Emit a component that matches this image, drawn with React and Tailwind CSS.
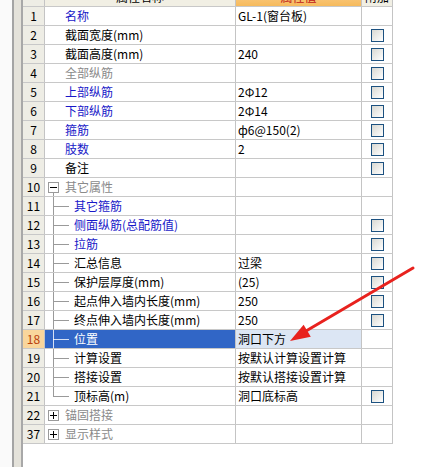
import React from 'react';

const BLUE = 'text-[#1818c8]';
const BLACK = 'text-black';
const GRAY = 'text-[#8a8a8a]';

// tree: 0 = none, 'minus' / 'plus' = expander box, 'child' = branch, 'last' = last branch
const rows = [
  { n: 1, name: '名称', c: BLUE, v: 'GL-1(窗台板)' },
  { n: 2, name: '截面宽度(mm)', c: BLACK, v: '', cb: true },
  { n: 3, name: '截面高度(mm)', c: BLACK, v: '240', cb: true },
  { n: 4, name: '全部纵筋', c: GRAY, v: '', cb: true },
  { n: 5, name: '上部纵筋', c: BLUE, v: '2Φ12', cb: true },
  { n: 6, name: '下部纵筋', c: BLUE, v: '2Φ14', cb: true },
  { n: 7, name: '箍筋', c: BLUE, v: 'ф6@150(2)', cb: true },
  { n: 8, name: '肢数', c: BLUE, v: '2', cb: true },
  { n: 9, name: '备注', c: BLACK, v: '', cb: true },
  { n: 10, name: '其它属性', c: GRAY, v: '', tree: 'minus' },
  { n: 11, name: '其它箍筋', c: BLUE, v: '', tree: 'child' },
  { n: 12, name: '侧面纵筋(总配筋值)', c: BLUE, v: '', tree: 'child', cb: true },
  { n: 13, name: '拉筋', c: BLUE, v: '', tree: 'child', cb: true },
  { n: 14, name: '汇总信息', c: BLACK, v: '过梁', tree: 'child', cb: true },
  { n: 15, name: '保护层厚度(mm)', c: BLACK, v: '(25)', tree: 'child', cb: true },
  { n: 16, name: '起点伸入墙内长度(mm)', c: BLACK, v: '250', tree: 'child', cb: true },
  { n: 17, name: '终点伸入墙内长度(mm)', c: BLACK, v: '250', tree: 'child', cb: true },
  { n: 18, name: '位置', c: 'text-white', v: '洞口下方', tree: 'child', selected: true },
  { n: 19, name: '计算设置', c: BLACK, v: '按默认计算设置计算', tree: 'child' },
  { n: 20, name: '搭接设置', c: BLACK, v: '按默认搭接设置计算', tree: 'child' },
  { n: 21, name: '顶标高(m)', c: BLACK, v: '洞口底标高', tree: 'last', cb: true },
  { n: 22, name: '锚固搭接', c: GRAY, v: '', tree: 'plus' },
  { n: 37, name: '显示样式', c: GRAY, v: '', tree: 'plus' },
];

function Checkbox() {
  return (
    <div className="w-[13px] h-[13px] border border-[#1c5180] bg-gradient-to-br from-[#d8d8d2] to-white" />
  );
}

function Expander({ sign }) {
  return (
    <div className="absolute left-[3px] top-[4px] w-[11px] h-[11px] border border-[#9a9a9a] bg-white flex items-center justify-center">
      <div className="relative w-[7px] h-[7px]">
        <div className="absolute left-0 top-[3px] w-[7px] h-px bg-black" />
        {sign === 'plus' && <div className="absolute left-[3px] top-0 w-px h-[7px] bg-black" />}
      </div>
    </div>
  );
}

function NameCell({ row }) {
  const line = row.selected ? 'bg-white/80' : 'bg-[#9a9a9a]';
  const isChild = row.tree === 'child' || row.tree === 'last';
  return (
    <div
      className={`relative w-[191px] border-r border-[#c4c4c4] flex items-center ${
        row.selected ? 'bg-[#3166c6]' : ''
      }`}
    >
      {(row.tree === 'minus' || row.tree === 'plus') && <Expander sign={row.tree} />}
      {row.tree === 'minus' && <div className="absolute left-[8px] top-[15px] bottom-0 w-px bg-[#9a9a9a]" />}
      {isChild && (
        <>
          <div
            className={`absolute left-[8px] top-0 w-px ${line} ${row.tree === 'last' ? 'h-[9px]' : 'bottom-0'}`}
          />
          <div className={`absolute left-[8px] top-[9px] w-[16px] h-px ${line}`} />
        </>
      )}
      <span className={`${isChild ? 'pl-[29px]' : 'pl-[20px]'} ${row.c} whitespace-nowrap`}>{row.name}</span>
    </div>
  );
}

function Row({ row }) {
  return (
    <div className="flex h-[19px] border-b border-[#c8c8c8] text-[12px] leading-[18px]">
      <div
        className={`w-[22px] border-r border-[#c4c4c4] flex items-center justify-center ${
          row.selected ? 'bg-[#f9d69c] text-[#b8400c]' : 'bg-[#eeede5] text-black'
        }`}
      >
        {row.n}
      </div>
      <NameCell row={row} />
      <div
        className={`w-[126px] border-r border-[#c4c4c4] pl-[2px] flex items-center whitespace-nowrap overflow-hidden text-black ${
          row.selected ? 'bg-[#dce6f4]' : ''
        }`}
      >
        {row.v}
      </div>
      <div className="w-[31px] border-r border-[#c4c4c4] flex items-center justify-center">
        {row.cb && <Checkbox />}
      </div>
    </div>
  );
}

export default function App() {
  return (
    <div
      className="relative w-[432px] h-[467px] overflow-hidden bg-white flex"
      style={{ fontFamily: '"Noto Sans CJK SC", "Liberation Sans", sans-serif' }}
    >
      <div className="w-[12px] bg-[#fafafa]" />
      <div className="w-[2px] bg-[#a4a4a4]" />
      <div className="w-[7px] bg-[#e4e2da]" />
      <div className="w-[2px] bg-[#a8a8a8]" />
      <div className="flex flex-col -mt-[12px]">
        <div className="flex h-[19px] border-b border-[#c8c8c8] text-[12px] leading-[18px]">
          <div className="w-[22px] border-r border-[#c4c4c4] bg-[#eeede5]" />
          <div className="w-[191px] border-r border-[#c4c4c4] bg-[#f1efe4] text-center text-black">属性名称</div>
          <div className="w-[126px] border-r border-[#c4c4c4] bg-gradient-to-b from-[#fbd392] to-[#f6ba5c] text-center text-[#c01818]">
            属性值
          </div>
          <div className="w-[31px] border-r border-[#c4c4c4] bg-[#f1efe4] text-center text-black">附加</div>
        </div>
        {rows.map((r) => (
          <Row key={r.n} row={r} />
        ))}
      </div>
      <svg className="absolute left-0 top-0 pointer-events-none" width="432" height="467" viewBox="0 0 432 467">
        <line x1="413" y1="268" x2="306" y2="331" stroke="#e8221e" strokeWidth="3" strokeLinecap="round" />
        <polygon points="290,341 310.8,336.8 303.6,324.8" fill="#e8221e" />
      </svg>
    </div>
  );
}
